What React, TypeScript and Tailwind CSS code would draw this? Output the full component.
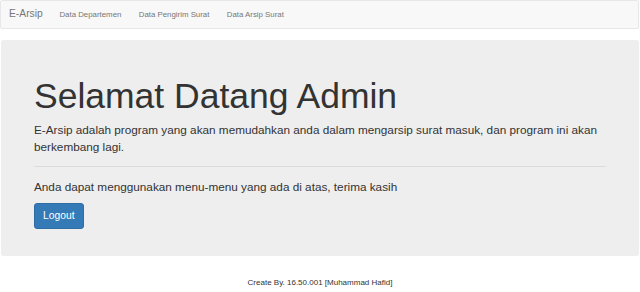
import React from 'react';

const navLinks = ['Data Departemen', 'Data Pengirim Surat', 'Data Arsip Surat'];

const App: React.FC = () => {
  return (
    <div
      className="min-h-[292px] w-[640px] bg-white text-[#333]"
      style={{ fontFamily: '"Liberation Sans", Arial, sans-serif' }}
    >
      {/* Navbar */}
      <nav className="mr-px flex h-[29px] items-center rounded-[2px] border border-[#e7e7e7] bg-[#f8f8f8]">
        <span className="px-[8px] text-[10.3px] leading-none text-[#777]">E-Arsip</span>
        <ul className="flex items-center">
          {navLinks.map(link => (
            <li key={link} className="px-[8.7px] text-[7.85px] leading-none text-[#777]">
              {link}
            </li>
          ))}
        </ul>
      </nav>

      {/* Jumbotron */}
      <div className="mx-px mt-[11px] rounded-[3px] bg-[#eeeeee] px-[33px] pt-[37px] pb-[27px]">
        <h1 className="mb-[6px] text-[35.5px] leading-[38px] font-normal">Selamat Datang Admin</h1>
        <p className="text-[11.75px] leading-[17px]">
          E-Arsip adalah program yang akan memudahkan anda dalam mengarsip surat masuk, dan program ini akan berkembang lagi.
        </p>
        <hr className="my-[11px] border-t border-[#dcdcdc]" />
        <p className="mb-[7px] text-[11.75px] leading-[17px]">
          Anda dapat menggunakan menu-menu yang ada di atas, terima kasih
        </p>
        <button className="h-[26px] rounded-[3px] border border-[#2e6da4] bg-[#337ab7] px-[8px] text-[10.3px] leading-none text-white">
          Logout
        </button>
      </div>

      {/* Footer */}
      <div className="mt-[21px] text-center text-[8px] leading-[11px]">
        Create By. 16.50.001 [Muhammad Hafid]
      </div>
    </div>
  );
};

export default App;
